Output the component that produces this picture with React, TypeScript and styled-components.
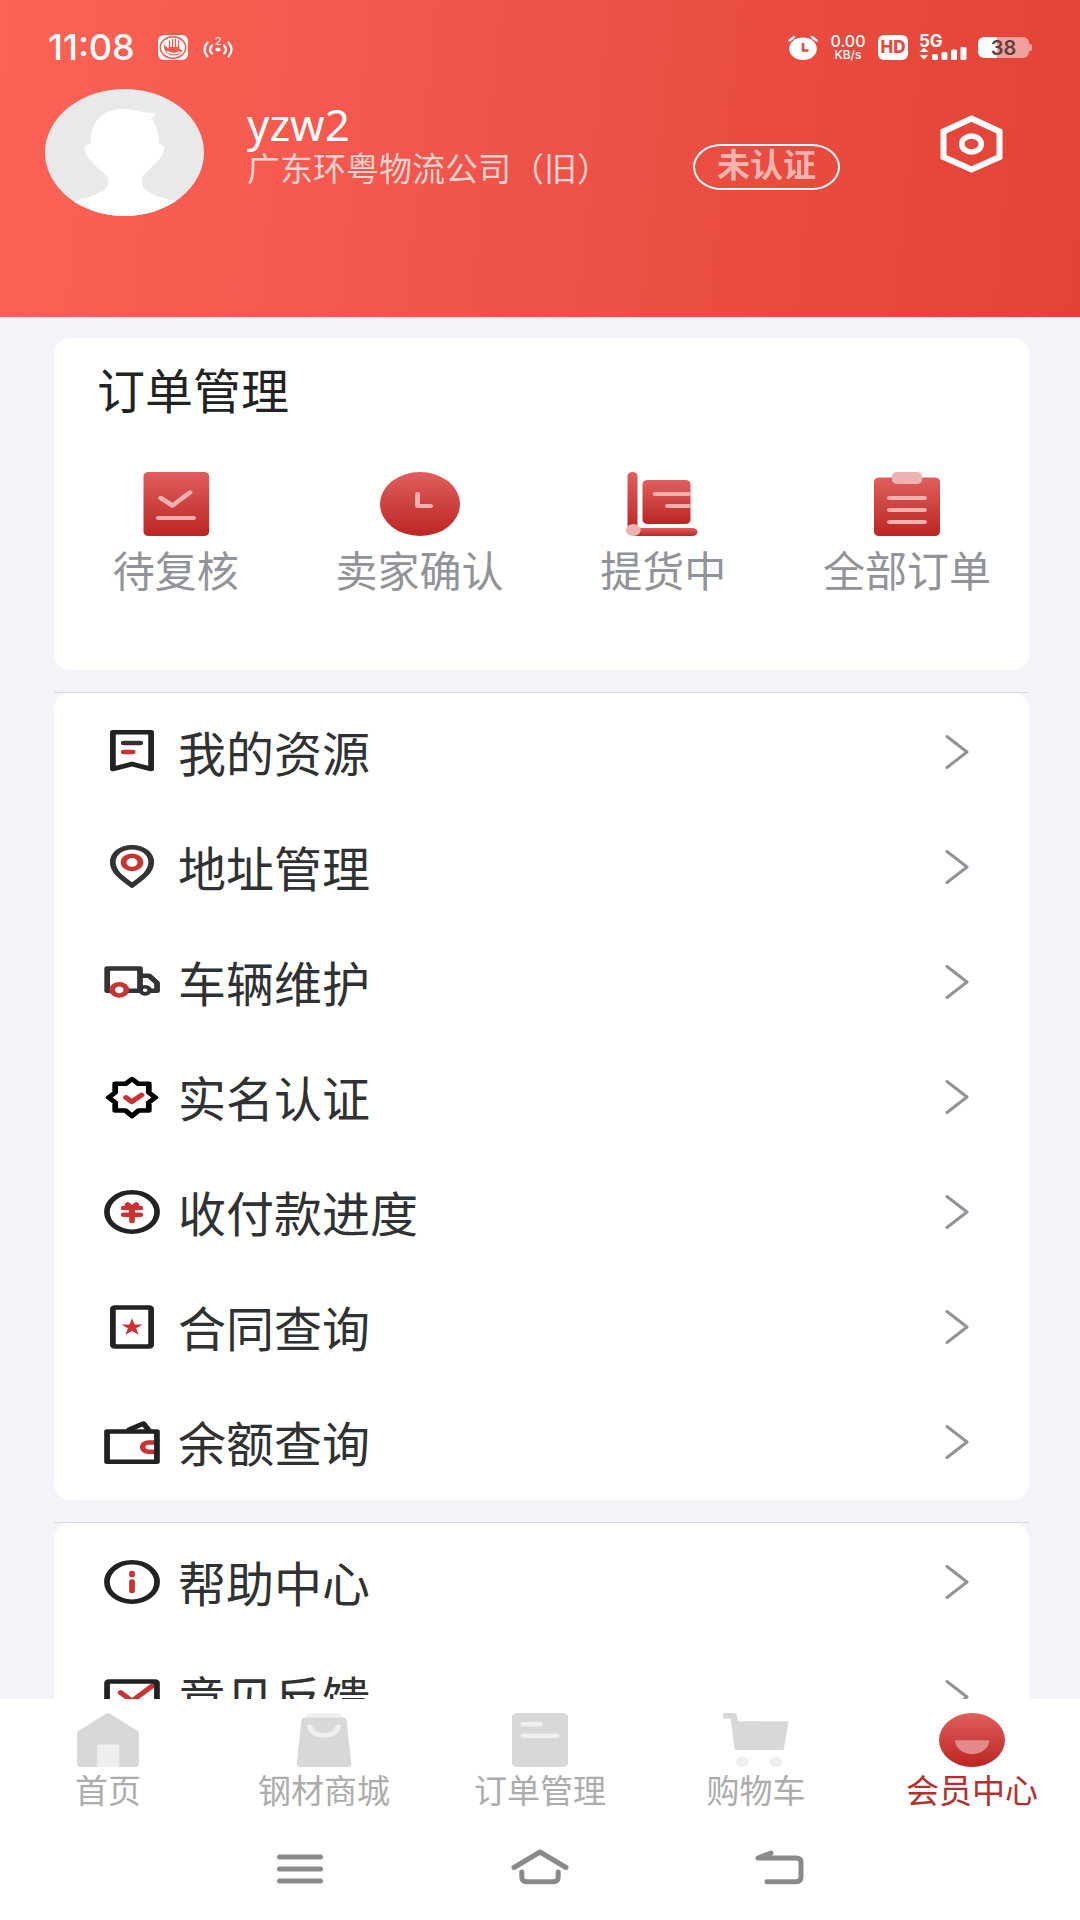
import React from "react";
import styled, { createGlobalStyle } from "styled-components";

const GlobalStyle = createGlobalStyle`
  *, *::before, *::after { box-sizing: border-box; }
  body {
    margin: 0;
    background: #f4f3f9;
    font-family: "Noto Sans", "Noto Sans CJK SC", sans-serif;
  }
  a { color: inherit; text-decoration: none; }
  button { font: inherit; color: inherit; background: none; border: 0; padding: 0; cursor: pointer; }
  ul, h1, h2, p { margin: 0; padding: 0; font-weight: 400; list-style: none; }
  svg { display: block; flex: none; }
`;

const Page = styled.div`
  display: flex;
  flex-direction: column;
  height: 100vh;
  overflow: hidden;
`;

/* ---------- header ---------- */

const Header = styled.header`
  flex: none;
  padding: 27px 48px 101px 45px;
  color: #fff;
  background: linear-gradient(96deg, #fc6256 0%, #ef5249 50%, #e84a3e 75%, #e34337 100%);
`;

const StatusBar = styled.div`
  display: flex;
  align-items: center;
  justify-content: space-between;
  height: 40px;
  font-family: Inter, "Liberation Sans", sans-serif;
`;

const StatusGroup = styled.div<{ $gap: number }>`
  display: flex;
  align-items: center;
  gap: ${(p) => p.$gap}px;
`;

const Clock = styled.time`
  padding-left: 3px;
  margin-right: 8px;
  font-size: 36px;
  line-height: 40px;
  font-weight: 500;
`;

const Speed = styled.div`
  display: flex;
  flex-direction: column;
  align-items: center;
  width: 38px;
  font-size: 16px;
  line-height: 16px;
  font-weight: 500;
`;

const SpeedUnit = styled.span`
  font-size: 12px;
  line-height: 12px;
`;

const HdBadge = styled.span`
  width: 30px;
  height: 25px;
  border-radius: 6px;
  background: #fff;
  color: #e7493d;
  font-size: 17px;
  line-height: 25px;
  font-weight: 800;
  text-align: center;
`;

const Network = styled.div`
  display: flex;
  flex-direction: column;
  width: 48px;
  font-size: 17px;
  line-height: 12px;
  font-weight: 700;
`;

const Battery = styled.div`
  display: flex;
  align-items: center;
`;

const BatteryBody = styled.span`
  width: 51px;
  height: 21px;
  border-radius: 6px;
  background: linear-gradient(90deg, #fff 38%, #f3a09b 38%);
  color: #5c4040;
  font-size: 20px;
  line-height: 22px;
  font-weight: 600;
  text-align: center;
`;

const BatteryNub = styled.span`
  width: 3px;
  height: 7px;
  border-radius: 0 2px 2px 0;
  background: #f3a09b;
`;

const Profile = styled.div`
  display: flex;
  align-items: flex-start;
  margin-top: 22px;
  padding-right: 29px;
`;

const Avatar = styled.div`
  flex: none;
  width: 159px;
  height: 127px;
  border-radius: 50%;
  overflow: hidden;
  background: #e9e9e9;
`;

const Identity = styled.div`
  margin: 8px 0 0 43px;
`;

const UserName = styled.h1`
  font-size: 44px;
  line-height: 54px;
`;

const Company = styled.p`
  font-size: 33px;
  line-height: 36px;
  color: #fdd3cf;
`;

const CertButton = styled.button`
  && {
    flex: none;
    width: 147px;
    height: 46px;
    margin: 55px 100px 0 auto;
    border: 2px solid #fff;
    border-radius: 28px / 23px;
    color: #f9b3ad;
    font-size: 33px;
    line-height: 38px;
    font-weight: 700;
    padding-bottom: 4px;
  }
`;

const SettingsButton = styled.button`
  flex: none;
  margin-top: 26px;
`;

/* ---------- content ---------- */

const Content = styled.main`
  flex: 1;
  min-height: 0;
  overflow-y: auto;
  scrollbar-width: none;
  padding: 21px 51px 0 54px;
  display: flex;
  flex-direction: column;
  gap: 22px;
`;

const OrderCard = styled.section`
  flex: none;
  padding: 25px 0 74px;
  border-radius: 16px;
  background: #fff;
`;

const CardTitle = styled.h2`
  padding-left: 43px;
  font-size: 48px;
  line-height: 56px;
  color: #222;
`;

const OrderGrid = styled.ul`
  display: grid;
  grid-template-columns: repeat(4, 1fr);
  margin-top: 53px;
`;

const OrderLink = styled.a`
  display: flex;
  flex-direction: column;
  align-items: center;
  gap: 10px;
  font-size: 42px;
  line-height: 50px;
  color: #909399;
  white-space: nowrap;
`;

const MenuSection = styled.section`
  flex: none;
  border-top: 1px solid #dadadd;
`;

const MenuList = styled.ul`
  padding: 1px 0;
  border-radius: 16px;
  background: #fff;
`;

const MenuLink = styled.a`
  display: flex;
  align-items: center;
  height: 115px;
  padding: 0 60px 0 50px;
`;

const MenuLabel = styled.span`
  flex: 1;
  margin-left: 18px;
  padding-top: 4px;
  font-size: 48px;
  line-height: 56px;
  color: #303133;
`;

/* ---------- bottom bars ---------- */

const TabBar = styled.nav`
  flex: none;
  display: grid;
  grid-template-columns: repeat(5, 1fr);
  padding: 14px 0 7px;
  background: #fff;
`;

const TabLink = styled.a<{ $active?: boolean }>`
  display: flex;
  flex-direction: column;
  align-items: center;
  gap: 4px;
  font-size: 33px;
  line-height: 40px;
  color: ${(p) => (p.$active ? "#b2302d" : "#acacac")};
`;

const SystemBar = styled.div`
  flex: none;
  display: grid;
  grid-template-columns: repeat(3, 22.2%);
  justify-content: center;
  justify-items: center;
  align-items: center;
  height: 102px;
  background: #fff;
`;

/* ---------- drawings ---------- */

const INK = "#222";
const RED = "#c93331";
const PINK = "#f0b0b0";
const LINE = { fill: "none", strokeLinecap: "round", strokeLinejoin: "round" } as const;

const WideIcon = ({ w, h, children }: { w: number; h: number; children: React.ReactNode }) => (
  <svg width={w} height={h} viewBox={`0 0 ${h} ${h}`} preserveAspectRatio="none" aria-hidden="true">
    {children}
  </svg>
);

const RedFade = ({ id }: { id: string }) => (
  <linearGradient id={id} x1="0" y1="0" x2="0" y2="1">
    <stop offset="0" stopColor="#df5f5e" />
    <stop offset="1" stopColor="#bc2523" />
  </linearGradient>
);

const AvatarArt = () => (
  <svg width="159" height="127" viewBox="0 0 159 127" aria-hidden="true">
    <path
      fill="#fff"
      d="M79 20C90 20 96 24 110.600 24C110 27 108 29 106 30C111 35 114 44 114 55C118 55 120 58 119 62C116 70 111 74 106 79C102 83 97 86 97 91V95C97 99 102 102 107 105C115 109 123 110 131 112L140 127H20L29 112C37 110 45 108 52 105C58 102 63 99 63 95V91C63 86 57 83 53 79C48 74 43 70 40 62C39 58 41 55 45.500 55C45 32 58 20 79 20Z"
    />
  </svg>
);

const GestureIcon = () => (
  <svg width="30" height="25" viewBox="0 0 30 25" aria-hidden="true">
    <rect width="30" height="25" rx="6" fill="#fff" />
    <ellipse cx="15" cy="12.500" rx="12.700" ry="10.700" fill="none" stroke="#f4584e" strokeWidth="1.500" />
    <path d="M6.500 9.500C4.500 14 9 20.500 15.500 20.500C20 20.500 23 18.500 24.500 15.500L21.500 14V12H10.500V14Z" fill="#f4584e" />
    <path d="M9.500 16.500C12 19 17 19.500 21.500 17" {...LINE} stroke="#fff" strokeWidth="1.600" />
    <path d="M11.500 12V6M14.500 12V4.500M17.500 12V4.500M20.500 12V6" {...LINE} stroke="#f4584e" strokeWidth="1.300" />
  </svg>
);

const HotspotIcon = () => (
  <svg width="30" height="26" viewBox="0 0 30 26" aria-hidden="true">
    <g {...LINE} stroke="#fff" strokeWidth="2.200">
      <path d="M4.500 8.500q-6 7 0 14M25.500 8.500q6 7 0 14M9 11.500q-4 4 0 8M21 11.500q4 4 0 8" />
    </g>
    <ellipse cx="15" cy="15.500" rx="2.600" ry="2" fill="#fff" />
    <text x="15" y="11" textAnchor="middle" fontSize="11" fill="#fff" fontFamily="Inter, sans-serif">
      2
    </text>
  </svg>
);

const AlarmIcon = () => (
  <svg width="30" height="25" viewBox="0 0 30 25" aria-hidden="true">
    <ellipse cx="15" cy="13.700" rx="13.800" ry="11.300" fill="#fff" />
    <path d="M1.500 5.500L6 2M28.500 5.500L24 2" {...LINE} stroke="#fff" strokeWidth="2.400" />
    <path d="M15 8v7.500h5.500" fill="none" stroke="#e7493d" strokeWidth="2.600" />
  </svg>
);

const SignalIcon = () => (
  <svg width="48" height="13" viewBox="0 0 48 13" aria-hidden="true">
    <path d="M0.500 5L5 0.500L9.500 5ZM0.500 8L5 12.500L9.500 8Z" fill="#fff" />
    <g fill="#fff">
      <rect x="13" y="7" width="6" height="6" rx="1.500" />
      <rect x="22.500" y="5" width="6" height="8" rx="1.500" />
      <rect x="32" y="2.500" width="6" height="10.500" rx="1.500" />
      <rect x="41.500" y="0" width="6" height="13" rx="1.500" />
    </g>
  </svg>
);

const SettingsIcon = () => (
  <svg width="63" height="58" viewBox="0 0 63 58" aria-hidden="true">
    <path d="M31.500 3.500L59.500 16.500V42L31.500 54.500L3.500 42V16.500Z" fill="none" stroke="#fff" strokeWidth="6" />
    <ellipse cx="31.500" cy="29" rx="9.800" ry="8" fill="none" stroke="#fff" strokeWidth="5.600" />
  </svg>
);

const Chevron = () => (
  <svg width="24" height="36" viewBox="0 0 24 36" aria-hidden="true">
    <path d="M2 2.500L22 18L2 33.500" {...LINE} stroke="#909399" strokeWidth="3" />
  </svg>
);

const orders = [
  {
    label: "待复核",
    art: (
      <>
        <RedFade id="review" />
        <rect x="6" y="0" width="52.500" height="64" rx="4" fill="url(#review)" />
        <path d="M19.800 26L29.200 33.500L43 20.500M18 46H46" {...LINE} stroke={PINK} strokeWidth="4.200" />
      </>
    ),
  },
  {
    label: "卖家确认",
    art: (
      <>
        <RedFade id="confirm" />
        <circle cx="32" cy="32" r="32" fill="url(#confirm)" />
        <path d="M30 22V34H40.500" {...LINE} stroke={PINK} strokeWidth="4" />
      </>
    ),
  },
  {
    label: "提货中",
    art: (
      <>
        <RedFade id="pickup" />
        <rect x="3.600" y="0" width="8" height="60" rx="4" fill="url(#pickup)" />
        <rect x="15.600" y="8" width="38.400" height="44" rx="4" fill="url(#pickup)" />
        <rect x="6" y="56" width="53.600" height="8" rx="4" fill="url(#pickup)" />
        <path d="M25.600 22H52.500M35.500 34H52.500" {...LINE} stroke={PINK} strokeWidth="4" />
        <circle cx="8.200" cy="58" r="6" fill="#ecb3b3" />
      </>
    ),
  },
  {
    label: "全部订单",
    art: (
      <>
        <RedFade id="all" />
        <rect x="5.600" y="5.500" width="52.800" height="58.500" rx="4" fill="url(#all)" />
        <rect x="20" y="0" width="24" height="12" rx="4" fill="#ecb3b3" />
        <path d="M18 26H46M18 38H46M18 50H46" {...LINE} stroke={PINK} strokeWidth="4" />
      </>
    ),
  },
];

const services = [
  {
    label: "我的资源",
    art: (
      <g {...LINE} strokeWidth="4.500">
        <path d="M7 2.300H37V39L22 34L7 39Z" stroke={INK} />
        <path d="M15.500 13H28.500" stroke="#333" />
        <path d="M15.500 22H22.500" stroke={RED} />
      </g>
    ),
  },
  {
    label: "地址管理",
    art: (
      <g {...LINE} strokeWidth="4.500">
        <path
          d="M22 40.500C17.500 35.500 6.900 28.500 6.900 17.300C6.900 8.500 13.500 2.200 22 2.200C30.500 2.200 37.100 8.500 37.100 17.300C37.100 28.500 26.500 35.500 22 40.500Z"
          stroke="#333"
        />
        <circle cx="22" cy="17.300" r="6.600" stroke={RED} />
      </g>
    ),
  },
  {
    label: "车辆维护",
    art: (
      <g {...LINE} strokeWidth="4.500">
        <path d="M5 30.800H2.500V8.500H28.300V30.800H20M28.300 15.800H35.500L41.700 23V30.800H37" stroke="#333" />
        <circle cx="32.300" cy="30.300" r="3.600" stroke="#333" strokeWidth="3.600" />
        <circle cx="12" cy="29.800" r="5.600" stroke={RED} fill="#fff" />
      </g>
    ),
  },
  {
    label: "实名认证",
    art: (
      <g {...LINE} strokeWidth="4.500">
        <path
          d="M22 4L27 8.800H35.200V17.500L40.300 22.500L35.200 27.500V35.600H27L22 41L17 35.600H8.800V27.500L3.700 22.500L8.800 17.500V8.800H17Z"
          stroke="#000"
        />
        <path d="M17.300 22.500L21.800 26.800L29.500 20" stroke={RED} />
      </g>
    ),
  },
  {
    label: "收付款进度",
    art: (
      <g {...LINE} strokeWidth="4.500">
        <circle cx="22" cy="22" r="19.700" stroke={INK} />
        <path d="M15.500 18H28.500M15.500 24.700H28.500M22 18V31M18.600 14.500L22 18L25.400 14.500" stroke={RED} />
      </g>
    ),
  },
  {
    label: "合同查询",
    art: (
      <>
        <rect x="7" y="2.400" width="30" height="39.200" rx="1.500" {...LINE} stroke={INK} strokeWidth="4.500" />
        <path
          d="M22 13.200L24 19.400H30.400L25.200 23.300L27.200 29.800L22 25.900L16.800 29.800L18.800 23.300L13.600 19.400H20Z"
          fill={RED}
        />
      </>
    ),
  },
  {
    label: "余额查询",
    art: (
      <g {...LINE} strokeWidth="4.500">
        <path d="M20 9.500L31 3.500L35 10" stroke={INK} />
        <path d="M39 22.500H35A4.600 4.600 0 0 0 35 31.700H39" stroke={RED} />
        <path d="M2.400 11.500H41.600V41.700H2.400Z" stroke={INK} />
      </g>
    ),
  },
];

const support = [
  {
    label: "帮助中心",
    art: (
      <g {...LINE} strokeWidth="4.500">
        <circle cx="22" cy="22" r="19.700" stroke={INK} />
        <path d="M22 13V15M22 21.500V31" stroke={RED} />
      </g>
    ),
  },
  {
    label: "意见反馈",
    art: (
      <g {...LINE} strokeWidth="4.500">
        <path d="M13 17.500L22 26L40 9" stroke={RED} />
        <rect x="2.400" y="6.500" width="39.200" height="33" rx="1.500" stroke={INK} />
      </g>
    ),
  },
];

const GREY = "#d8d8d8";
const PALE = "#efefef";

const tabs = [
  {
    label: "首页",
    art: (
      <>
        <path
          d="M24.800 0.800Q26.500 -0.500 28.200 0.800L50 17.500Q51.300 18.500 51.300 20V50Q51.300 53 48.500 53H4.500Q1.700 53 1.700 50V20Q1.700 18.500 3 17.500Z"
          fill={GREY}
        />
        <path d="M17.800 53V32.500Q17.800 31 19.300 31H34Q35.500 31 35.500 32.500V53Z" fill={PALE} />
      </>
    ),
  },
  {
    label: "钢材商城",
    art: (
      <>
        <path d="M11 5L13.500 1Q14 0 15.500 0H37.500Q39 0 39.500 1L42 5Z" fill={PALE} />
        <path d="M11.500 4.300H41.500Q44.300 4.300 44.600 7L48.400 49.500Q48.600 53 45.500 53H7.600Q4.500 53 4.700 49.500L8.400 7Q8.700 4.300 11.500 4.300Z" fill={GREY} />
        <path d="M15.200 13.500C17 25 36 25 37.800 13.500" {...LINE} stroke={PALE} strokeWidth="4.400" />
      </>
    ),
  },
  {
    label: "订单管理",
    art: (
      <>
        <rect x="4" y="0" width="45" height="53" rx="4" fill={GREY} />
        <path d="M13 11H26.500M13 22.300H40" {...LINE} stroke={PALE} strokeWidth="4.400" />
      </>
    ),
  },
  {
    label: "购物车",
    art: (
      <>
        <path d="M2 2.800H8.500L9.500 10" {...LINE} stroke={GREY} strokeWidth="5.400" />
        <path d="M6.500 8H51.500Q52.800 8 52.600 9.500L48.900 34.800Q48.600 36.300 47.200 36.300H10.800Q9.400 36.300 9.200 34.800Z" fill={GREY} />
        <circle cx="15.500" cy="48" r="5.200" fill={PALE} />
        <circle cx="42.500" cy="48" r="5.200" fill={PALE} />
      </>
    ),
  },
  {
    label: "会员中心",
    active: true,
    art: (
      <>
        <RedFade id="member" />
        <circle cx="26.500" cy="26.500" r="26.500" fill="url(#member)" />
        <path d="M12.900 26.700H40.300A13.700 13.700 0 0 1 12.900 26.700Z" fill="#e28a8a" />
      </>
    ),
  },
];

const TabIcon = ({ children }: { children: React.ReactNode }) => (
  <svg width="66" height="54" viewBox="0 0 53 53" preserveAspectRatio="none" aria-hidden="true">
    {children}
  </svg>
);

const Menu = ({ items }: { items: { label: string; art: React.ReactNode }[] }) => (
  <MenuSection>
    <MenuList>
      {items.map((item) => (
        <li key={item.label}>
          <MenuLink href="#">
            <WideIcon w={56} h={44}>{item.art}</WideIcon>
            <MenuLabel>{item.label}</MenuLabel>
            <Chevron />
          </MenuLink>
        </li>
      ))}
    </MenuList>
  </MenuSection>
);

export default function App() {
  return (
    <Page>
      <GlobalStyle />
      <Header>
        <StatusBar>
          <StatusGroup $gap={15}>
            <Clock>11:08</Clock>
            <GestureIcon />
            <HotspotIcon />
          </StatusGroup>
          <StatusGroup $gap={11}>
            <AlarmIcon />
            <Speed>
              0.00
              <SpeedUnit>KB/s</SpeedUnit>
            </Speed>
            <HdBadge>HD</HdBadge>
            <Network>
              5G
              <SignalIcon />
            </Network>
            <Battery>
              <BatteryBody>38</BatteryBody>
              <BatteryNub />
            </Battery>
          </StatusGroup>
        </StatusBar>
        <Profile>
          <Avatar>
            <AvatarArt />
          </Avatar>
          <Identity>
            <UserName>yzw2</UserName>
            <Company>广东环粤物流公司（旧）</Company>
          </Identity>
          <CertButton type="button">未认证</CertButton>
          <SettingsButton type="button" aria-label="设置">
            <SettingsIcon />
          </SettingsButton>
        </Profile>
      </Header>

      <Content>
        <OrderCard>
          <CardTitle>订单管理</CardTitle>
          <OrderGrid>
            {orders.map((item) => (
              <li key={item.label}>
                <OrderLink href="#">
                  <WideIcon w={80} h={64}>{item.art}</WideIcon>
                  {item.label}
                </OrderLink>
              </li>
            ))}
          </OrderGrid>
        </OrderCard>
        <Menu items={services} />
        <Menu items={support} />
      </Content>

      <TabBar>
        {tabs.map((tab) => (
          <TabLink key={tab.label} href="#" $active={tab.active}>
            <TabIcon>{tab.art}</TabIcon>
            {tab.label}
          </TabLink>
        ))}
      </TabBar>
      <SystemBar>
        <button type="button" aria-label="菜单">
          <svg width="46" height="30" viewBox="0 0 46 30" aria-hidden="true">
            <path d="M2.500 3H43.500M2.500 15H43.500M2.500 27H43.500" {...LINE} stroke="#8a8a8a" strokeWidth="5" />
          </svg>
        </button>
        <button type="button" aria-label="主页">
          <svg width="58" height="42" viewBox="0 0 58 42" aria-hidden="true">
            <g {...LINE} stroke="#8a8a8a" strokeWidth="5">
              <path d="M3 19.500L29 4L55 19.500" />
              <path d="M10.800 24V29Q10.800 33.800 16 33.800H42Q47.200 33.800 47.200 29V24" />
            </g>
          </svg>
        </button>
        <button type="button" aria-label="返回">
          <svg width="50" height="42" viewBox="0 0 50 42" aria-hidden="true">
            <path
              d="M16 5L3 10H41Q46 10 46 14V29Q46 33.800 41 33.800H12"
              {...LINE}
              stroke="#8a8a8a"
              strokeWidth="5"
            />
          </svg>
        </button>
      </SystemBar>
    </Page>
  );
}
